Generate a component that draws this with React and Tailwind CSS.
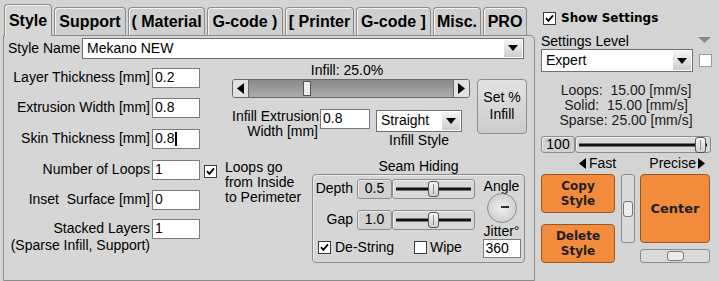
import React from 'react';

// small pieces shared by the form
const Check = ({ checked, className = '' }) => (
  <span className={`flex h-[13px] w-[13px] shrink-0 items-center justify-center border border-[#3c3c3c] bg-white ${className}`}>
    {checked && (
      <svg width="9" height="9" viewBox="0 0 9 9">
        <path d="M1 4.2 L3.4 6.8 L8 1.4" fill="none" stroke="#000" strokeWidth="1.8" />
      </svg>
    )}
  </span>
);

const Field = ({ value, className = 'h-[20px] w-[48px]', caret }) => (
  <div className={`flex shrink-0 items-center border border-[#7b7b7b] bg-white pl-[2px] text-[14px] ${className}`}>
    {value}
    {caret && <span className="ml-[1px] h-[14px] w-[2px] bg-black" />}
  </div>
);

const ArrowDown = () => (
  <svg width="10" height="6" viewBox="0 0 10 6">
    <path d="M0 0 H10 L5 6 Z" fill="#000" />
  </svg>
);

const Select = ({ value, className }) => (
  <div className={`flex shrink-0 items-stretch border border-[#6f6f6f] bg-white p-[1px] ${className}`}>
    <span className="flex flex-1 items-center pl-[3px] text-[14px]">{value}</span>
    <span className="flex w-[18px] items-center justify-center bg-linear-to-b from-[#f4f4f4] to-[#cdcdcd]">
      <ArrowDown />
    </span>
  </div>
);

const ValueBox = ({ value, className }) => (
  <div className={`flex shrink-0 items-center justify-center rounded-[3px] border border-[#8c8c8c] bg-[#d0d0d0] shadow-[inset_1px_1px_0_#ececec] text-[14px] ${className}`}>
    {value}
  </div>
);

// track with a black line and a thumb sitting on it
const LineSlider = ({ className, thumb }) => (
  <div className={`relative shrink-0 rounded-[3px] border border-[#8c8c8c] bg-[#d8d8d8] shadow-[inset_1px_1px_0_#f0f0f0] ${className}`}>
    <div className="absolute left-[3px] right-[3px] top-1/2 h-[3px] -translate-y-1/2 bg-[#111]" />
    <div className={`absolute top-1/2 flex h-[16px] w-[11px] -translate-y-1/2 items-center justify-center rounded-[3px] border border-[#555] bg-linear-to-b from-[#f6f6f6] to-[#cfcfcf] ${thumb}`}>
      <span className="h-[10px] w-[1px] bg-[#888]" />
    </div>
  </div>
);

const Tri = ({ dir }) => (
  <svg width="7" height="11" viewBox="0 0 7 11">
    {dir === 'left' ? <path d="M7 0 V11 L0 5.5 Z" fill="#000" /> : <path d="M0 0 V11 L7 5.5 Z" fill="#000" />}
  </svg>
);

const tabs = [
  { label: 'Style', w: 'w-[48px]', active: true },
  { label: 'Support', w: 'w-[72px]' },
  { label: '( Material', w: 'w-[77px]' },
  { label: 'G-code )', w: 'w-[76px]' },
  { label: '[ Printer', w: 'w-[69px]' },
  { label: 'G-code ]', w: 'w-[75px]' },
  { label: 'Misc.', w: 'w-[48px]' },
  { label: 'PRO', w: 'w-[44px]' },
];

const rows = [
  { label: 'Layer Thickness [mm]', value: '0.2', mt: 'mt-[9px]' },
  { label: 'Extrusion Width [mm]', value: '0.8', mt: 'mt-[10px]' },
  { label: 'Skin Thickness [mm]', value: '0.8', mt: 'mt-[11px]', caret: true },
  { label: 'Number of Loops', value: '1', mt: 'mt-[11px]' },
  { label: 'Inset  Surface [mm]', value: '0', mt: 'mt-[10px]' },
  { label: 'Stacked Layers', value: '1', mt: 'mt-[9px]' },
];

const App = () => {
  return (
    <div className="flex h-[281px] w-[719px] overflow-hidden bg-[#d4d4d4] font-['Liberation_Sans',Arial,sans-serif] text-[14px] leading-[17px] text-black">
      {/* Left: tabs + settings panel */}
      <div className="flex w-[535px] shrink-0 flex-col">
        <div className="flex h-[35px] items-end gap-[2px] pl-[4px]">
          {tabs.map((t) => (
            <div
              key={t.label}
              className={`flex shrink-0 items-center justify-center rounded-t-[4px] border border-b-0 border-[#8c8c8c] text-[16px] font-bold shadow-[inset_1px_1px_0_#f2f2f2] ${t.w} ${
                t.active ? 'relative z-10 -mb-[1px] h-[32px] bg-[#d6d6d6]' : 'h-[28px] bg-[#cfcfcf]'
              }`}
            >
              {t.label}
            </div>
          ))}
        </div>

        <div className="ml-[3px] h-[250px] w-[532px] rounded-tr-[5px] border border-[#8c8c8c] bg-[#d6d6d6]">
          {/* Style name */}
          <div className="mt-[2px] flex h-[21px] items-center">
            <span className="ml-[4px] w-[74px]">Style Name</span>
            <Select value="Mekano NEW" className="h-[21px] w-[442px]" />
          </div>

          <div className="flex">
            {/* Left column of numeric settings */}
            <div className="flex w-[196px] shrink-0 flex-col">
              {rows.map((r) => (
                <div key={r.label} className={`flex h-[20px] items-center justify-end gap-[2px] ${r.mt}`}>
                  <span className="whitespace-pre">{r.label}</span>
                  <Field value={r.value} caret={r.caret} />
                </div>
              ))}
              <div className="-mt-[2px] w-[146px] text-right leading-[16px]">(Sparse Infill, Support)</div>
            </div>

            {/* Right part: infill + seam hiding */}
            <div className="flex flex-1 flex-col">
              <div className="ml-[32px] flex flex-col">
                <div className="mt-[3px] w-[238px] pr-[8px] text-center">Infill: 25.0%</div>
                <div className="flex">
                  <div className="flex w-[238px] flex-col">
                    <div className="flex h-[19px] rounded-[3px] border border-[#6a6a6a]">
                      <div className="flex w-[16px] items-center justify-center rounded-l-[2px] border-r border-[#6a6a6a] bg-[#e2e2e2]">
                        <Tri dir="left" />
                      </div>
                      <div className="flex flex-1 items-center bg-linear-to-b from-[#8a8a8a] to-[#ababab]">
                        <div className="ml-[54px] h-[15px] w-[8px] border border-[#555] bg-[#ececec]" />
                      </div>
                      <div className="flex w-[16px] items-center justify-center rounded-r-[2px] border-l border-[#6a6a6a] bg-[#e2e2e2]">
                        <Tri dir="right" />
                      </div>
                    </div>
                    <div className="mt-[11px] flex items-start">
                      <div className="w-[86px] whitespace-nowrap text-right leading-[15px]">
                        Infill Extrusion
                        <br />
                        Width [mm]
                      </div>
                      <Field value="0.8" className="ml-[2px] h-[20px] w-[50px]" />
                      <div className="ml-[6px] flex w-[86px] flex-col">
                        <Select value="Straight" className="mt-[1px] h-[22px] w-[86px]" />
                        <div className="text-center">Infill Style</div>
                      </div>
                    </div>
                  </div>
                  <div className="ml-[7px] flex h-[55px] w-[50px] flex-col items-center justify-center rounded-[4px] border border-[#8c8c8c] bg-linear-to-b from-[#e2e2e2] to-[#cccccc] leading-[17px]">
                    <span>Set %</span>
                    <span>Infill</span>
                  </div>
                </div>
              </div>

              <div className="mt-[9px] flex">
                {/* loops direction */}
                <div className="flex w-[112px] shrink-0 items-start pl-[4px]">
                  <Check checked className="mt-[7px]" />
                  <div className="ml-[8px] mt-[2px] whitespace-nowrap leading-[15px]">
                    Loops go
                    <br />
                    from Inside
                    <br />
                    to Perimeter
                  </div>
                </div>

                {/* Seam hiding */}
                <div className="flex w-[213px] flex-col">
                  <div className="text-center leading-[16px]">Seam Hiding</div>
                  <div className="flex h-[89px] rounded-[4px] border border-[#8c8c8c] shadow-[inset_1px_1px_0_#ececec]">
                    <div className="flex w-[166px] flex-col pt-[4px]">
                      <div className="flex h-[20px] items-center">
                        <span className="w-[43px] pr-[3px] text-right">Depth</span>
                        <ValueBox value="0.5" className="ml-[1px] h-[20px] w-[35px]" />
                        <LineSlider className="h-[20px] w-[83px]" thumb="left-[35px]" />
                      </div>
                      <div className="mt-[11px] flex h-[20px] items-center">
                        <span className="w-[43px] pr-[3px] text-right">Gap</span>
                        <ValueBox value="1.0" className="ml-[1px] h-[20px] w-[35px]" />
                        <LineSlider className="h-[20px] w-[83px]" thumb="left-[35px]" />
                      </div>
                      <div className="mt-[11px] flex h-[14px] items-center">
                        <Check checked className="ml-[5px]" />
                        <span className="ml-[4px] w-[79px]">De-String</span>
                        <Check />
                        <span className="ml-[3px]">Wipe</span>
                      </div>
                    </div>
                    <div className="flex flex-1 flex-col items-center">
                      <div className="mt-[3px] leading-[16px]">Angle</div>
                      <div className="mt-[-1px] h-[30px] w-[30px] rounded-full border border-[#8c8c8c] bg-radial from-[#f0f0f0] to-[#c4c4c4]">
                        <svg width="28" height="28" viewBox="0 0 28 28">
                          <path d="M13 13 H21" stroke="#000" strokeWidth="1.6" />
                        </svg>
                      </div>
                      <div className="leading-[16px]">Jitter°</div>
                      <Field value="360" className="h-[19px] w-[38px]" />
                    </div>
                  </div>
                </div>
              </div>
            </div>
          </div>
        </div>
      </div>

      {/* Right: settings level + speed + actions */}
      <div className="flex w-[184px] shrink-0 flex-col pl-[6px] pr-[8px]">
        <div className="mt-[12px] flex h-[13px] items-center">
          <Check checked className="ml-[2px]" />
          <span className="ml-[5px] font-['DejaVu_Sans',sans-serif] text-[12px] font-bold">Show Settings</span>
        </div>
        <div className="mt-[8px] flex h-[16px] items-start">
          <span className="leading-[16px]">Settings Level</span>
          <svg className="ml-auto mt-[4px]" width="13" height="6" viewBox="0 0 13 6">
            <path d="M0 0 H13 L6.5 6 Z" fill="#8a8a8a" />
          </svg>
        </div>
        <div className="flex h-[23px] items-center">
          <Select value="Expert" className="h-[23px] w-[152px]" />
          <Check className="ml-[6px] border-[#9a9a9a]" />
        </div>
        <div className="mt-[11px] text-center leading-[15px] text-[#1c1c1c]">
          <div>Loops:&nbsp; 15.00 [mm/s]</div>
          <div>Solid:&nbsp; 15.00 [mm/s]</div>
          <div>Sparse: 25.00 [mm/s]</div>
        </div>
        <div className="mt-[8px] flex h-[17px]">
          <ValueBox value="100" className="h-[17px] w-[34px]" />
          <LineSlider className="h-[17px] flex-1" thumb="left-[119px] h-[14px]" />
        </div>
        <div className="mt-[3px] flex h-[14px] items-center leading-[14px]">
          <span className="ml-[38px] flex items-center gap-[3px]">
            <Tri dir="left" />
            Fast
          </span>
          <span className="ml-auto mr-[6px] flex items-center gap-[2px]">
            Precise
            <Tri dir="right" />
          </span>
        </div>
        <div className="mt-[4px] flex font-['DejaVu_Sans',sans-serif] font-bold text-[#1e1e1e]">
          <div className="flex w-[74px] flex-col gap-[11px]">
            <div className="flex h-[39px] flex-col items-center justify-center rounded-[4px] border border-[#9a5524] bg-[#f28b3c] text-[12px] leading-[15px]">
              <span>Copy</span>
              <span>Style</span>
            </div>
            <div className="flex h-[39px] flex-col items-center justify-center rounded-[4px] border border-[#9a5524] bg-[#f28b3c] text-[12px] leading-[15px]">
              <span>Delete</span>
              <span>Style</span>
            </div>
          </div>
          <div className="ml-[6px] flex h-[69px] w-[14px] flex-col items-center rounded-[3px] border border-[#8c8c8c] bg-[#dadada]">
            <div className="mt-[26px] h-[16px] w-[10px] rounded-[3px] border border-[#777] bg-[#ececec]" />
          </div>
          <div className="ml-[5px] flex w-[70px] flex-col">
            <div className="flex h-[69px] items-center justify-center rounded-[4px] border border-[#9a5524] bg-[#f28b3c] text-[13px]">
              Center
            </div>
            <div className="mt-[6px] flex h-[14px] items-center rounded-[3px] border border-[#8c8c8c] bg-[#dadada]">
              <div className="ml-[26px] h-[10px] w-[17px] rounded-[3px] border border-[#777] bg-[#ececec]" />
            </div>
          </div>
        </div>
      </div>
    </div>
  );
};

export default App;
